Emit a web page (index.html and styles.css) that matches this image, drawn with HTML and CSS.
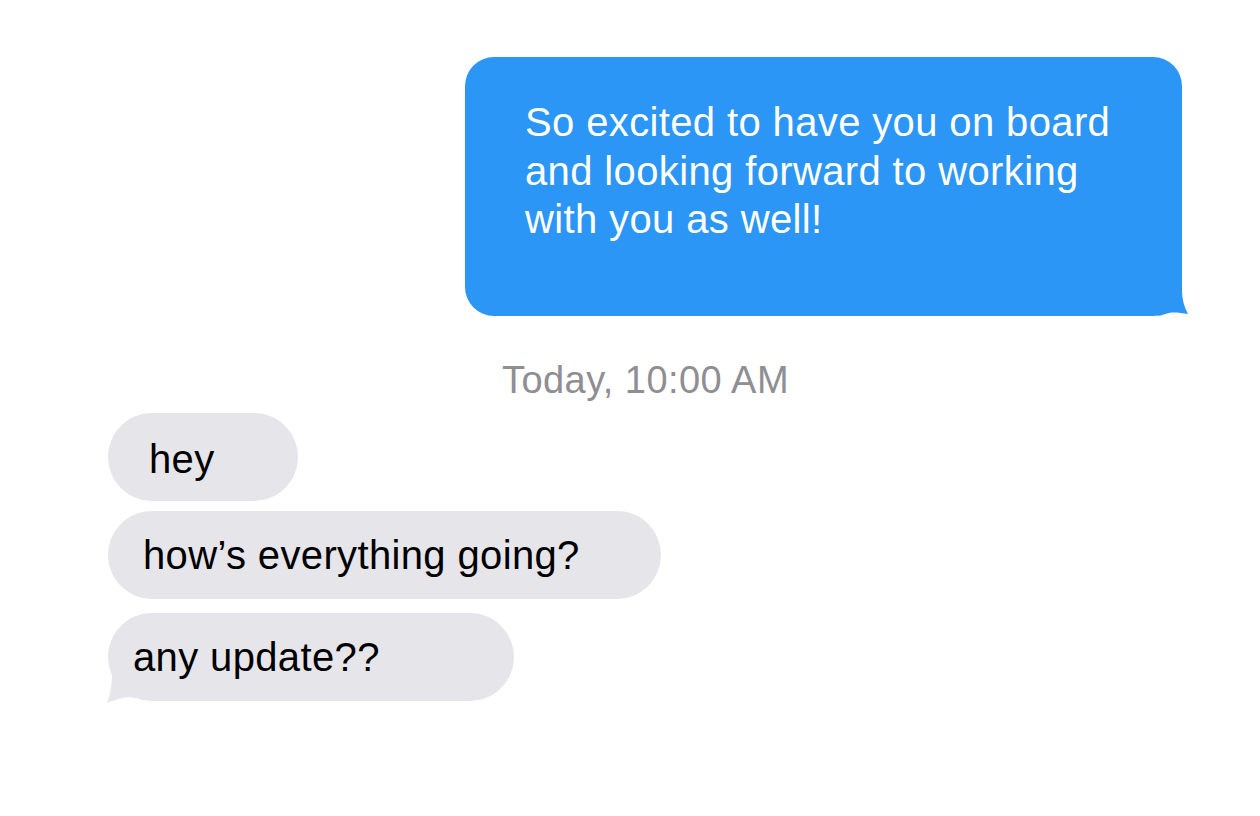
FILE: index.html
```html
<!DOCTYPE html>
<html>
<head>
<meta charset="utf-8">
<link rel="stylesheet" href="styles.css">
</head>
<body>
<div class="chat">
  <div class="row row-out">
    <div class="bubble bubble-out">
      So excited to have you on board<br>and looking forward to working<br>with you as well!
      <svg class="tail tail-out" width="30" height="30" viewBox="0 0 30 30"><path d="M0 0 H23 V4 C23 13 25 21 29 28 C22 27 15 26 10 27 C6 28 3 29 0 30 Z" fill="#2b96f5"/></svg>
    </div>
  </div>
  <div class="stamp">Today, 10:00 AM</div>
  <div class="incoming">
    <div class="bubble bubble-in b-hey">hey</div>
    <div class="bubble bubble-in b-how">how’s everything going?</div>
    <div class="bubble bubble-in b-any">any update??
      <svg class="tail tail-in" width="30" height="32" viewBox="0 0 30 32"><path d="M6 0 L30 0 L30 26 C24 25 20 25 16 26 C11 27 6 29 1 31 C4 24 6 14 6 0 Z" fill="#e5e5ea"/></svg>
    </div>
  </div>
</div>
</body>
</html>
```
FILE: styles.css
```css
html, body {
  margin: 0;
  padding: 0;
  background: #ffffff;
}
body {
  font-family: "Liberation Sans", Arial, Helvetica, sans-serif;
  width: 1260px;
  height: 816px;
  overflow: hidden;
}
.chat {
  display: flex;
  flex-direction: column;
  padding-top: 57px;
}
.row-out {
  display: flex;
  padding-left: 465px;
}
.bubble {
  position: relative;
  box-sizing: border-box;
}
.bubble-out {
  width: 717px;
  height: 259px;
  background: #2b96f5;
  color: #ffffff;
  border-radius: 29px;
  font-size: 40px;
  letter-spacing: 0.37px;
  line-height: 48.5px;
  padding: 41px 40px 0 60px;
}
.tail {
  position: absolute;
}
.tail-out {
  right: -7px;
  bottom: 0;
}
.stamp {
  margin-top: 42px;
  padding-left: 502px;
  font-size: 38px;
  letter-spacing: 0.45px;
  line-height: 44px;
  color: #8e8e93;
}
.incoming {
  display: flex;
  flex-direction: column;
  align-items: flex-start;
  padding-left: 108px;
  margin-top: 11px;
}
.bubble-in {
  height: 88px;
  background: #e5e5ea;
  color: #000000;
  border-radius: 44px;
  font-size: 40px;
  letter-spacing: 0.36px;
  line-height: 88px;
}
.b-hey {
  width: 190px;
  padding-left: 41px;
  padding-top: 2px;
}
.b-how {
  width: 553px;
  padding-left: 35px;
  margin-top: 10px;
}
.b-any {
  width: 406px;
  padding-left: 25px;
  margin-top: 14px;
}
.tail-in {
  left: -2px;
  bottom: -3px;
}
```
